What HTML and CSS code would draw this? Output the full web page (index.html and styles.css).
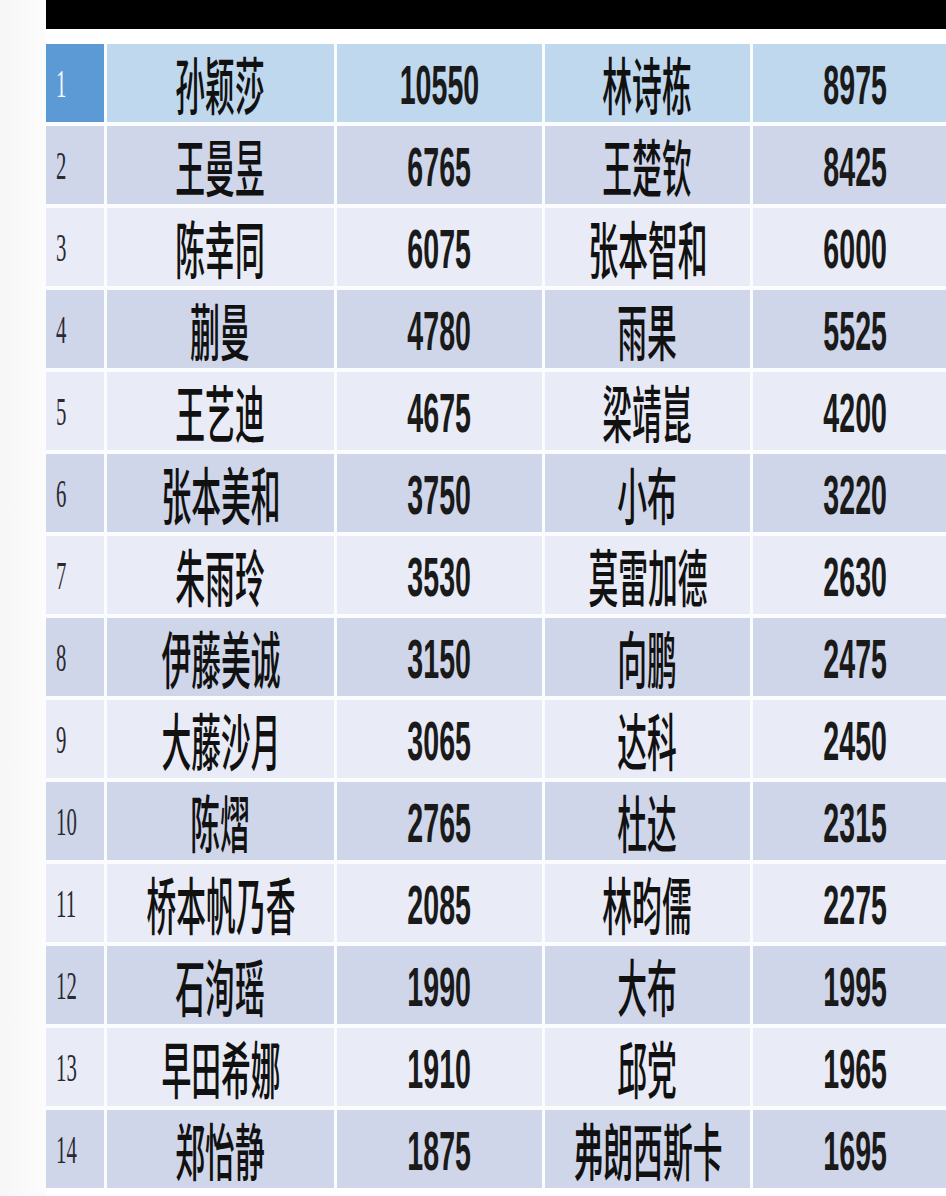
FILE: index.html
```html
<!DOCTYPE html>
<html lang="zh">
<head>
<meta charset="utf-8">
<title>排名</title>
<link rel="stylesheet" href="styles.css">
</head>
<body>
<div class="page">
  <div class="topbar"></div>
  <div class="table">
    <div class="row first"><div class="idx"><span>1</span></div><div class="cell"><span class="name">孙颖莎</span></div><div class="cell"><span class="num">10550</span></div><div class="cell"><span class="name">林诗栋</span></div><div class="cell"><span class="num">8975</span></div></div>
    <div class="row even"><div class="idx"><span>2</span></div><div class="cell"><span class="name">王曼昱</span></div><div class="cell"><span class="num">6765</span></div><div class="cell"><span class="name">王楚钦</span></div><div class="cell"><span class="num">8425</span></div></div>
    <div class="row odd"><div class="idx"><span>3</span></div><div class="cell"><span class="name">陈幸同</span></div><div class="cell"><span class="num">6075</span></div><div class="cell"><span class="name">张本智和</span></div><div class="cell"><span class="num">6000</span></div></div>
    <div class="row even"><div class="idx"><span>4</span></div><div class="cell"><span class="name">蒯曼</span></div><div class="cell"><span class="num">4780</span></div><div class="cell"><span class="name">雨果</span></div><div class="cell"><span class="num">5525</span></div></div>
    <div class="row odd"><div class="idx"><span>5</span></div><div class="cell"><span class="name">王艺迪</span></div><div class="cell"><span class="num">4675</span></div><div class="cell"><span class="name">梁靖崑</span></div><div class="cell"><span class="num">4200</span></div></div>
    <div class="row even"><div class="idx"><span>6</span></div><div class="cell"><span class="name">张本美和</span></div><div class="cell"><span class="num">3750</span></div><div class="cell"><span class="name">小布</span></div><div class="cell"><span class="num">3220</span></div></div>
    <div class="row odd"><div class="idx"><span>7</span></div><div class="cell"><span class="name">朱雨玲</span></div><div class="cell"><span class="num">3530</span></div><div class="cell"><span class="name">莫雷加德</span></div><div class="cell"><span class="num">2630</span></div></div>
    <div class="row even"><div class="idx"><span>8</span></div><div class="cell"><span class="name">伊藤美诚</span></div><div class="cell"><span class="num">3150</span></div><div class="cell"><span class="name">向鹏</span></div><div class="cell"><span class="num">2475</span></div></div>
    <div class="row odd"><div class="idx"><span>9</span></div><div class="cell"><span class="name">大藤沙月</span></div><div class="cell"><span class="num">3065</span></div><div class="cell"><span class="name">达科</span></div><div class="cell"><span class="num">2450</span></div></div>
    <div class="row even"><div class="idx"><span>10</span></div><div class="cell"><span class="name">陈熠</span></div><div class="cell"><span class="num">2765</span></div><div class="cell"><span class="name">杜达</span></div><div class="cell"><span class="num">2315</span></div></div>
    <div class="row odd"><div class="idx"><span>11</span></div><div class="cell"><span class="name">桥本帆乃香</span></div><div class="cell"><span class="num">2085</span></div><div class="cell"><span class="name">林昀儒</span></div><div class="cell"><span class="num">2275</span></div></div>
    <div class="row even"><div class="idx"><span>12</span></div><div class="cell"><span class="name">石洵瑶</span></div><div class="cell"><span class="num">1990</span></div><div class="cell"><span class="name">大布</span></div><div class="cell"><span class="num">1995</span></div></div>
    <div class="row odd"><div class="idx"><span>13</span></div><div class="cell"><span class="name">早田希娜</span></div><div class="cell"><span class="num">1910</span></div><div class="cell"><span class="name">邱党</span></div><div class="cell"><span class="num">1965</span></div></div>
    <div class="row even"><div class="idx"><span>14</span></div><div class="cell"><span class="name">郑怡静</span></div><div class="cell"><span class="num">1875</span></div><div class="cell"><span class="name">弗朗西斯卡</span></div><div class="cell"><span class="num">1695</span></div></div>
  </div>
</div>
</body>
</html>
```

FILE: styles.css
```css
html, body {
  margin: 0;
  padding: 0;
}
body {
  width: 946px;
  height: 1196px;
  overflow: hidden;
  background: linear-gradient(to right, #f6f6f6 0px, #fcfcfc 46px, #ffffff 46px);
}
.page {
  padding-left: 46px;
  height: 1196px;
  overflow: hidden;
}
.topbar {
  height: 29px;
  background: #000;
}
.table {
  margin-top: 15px;
  display: flex;
  flex-direction: column;
  gap: 4px;
  background: #fbfcfe;
}
.row {
  display: grid;
  grid-template-columns: 58px 227px 205px 205px 205px;
  column-gap: 3px;
  height: 78px;
}
.idx, .cell {
  display: flex;
  align-items: center;
}
.cell {
  justify-content: center;
}
.idx {
  padding-left: 10px;
}
.idx span {
  display: inline-block;
  font-family: "Liberation Serif", "Times New Roman", serif;
  font-size: 40px;
  color: #2a2a32;
  transform: scaleX(0.52);
  transform-origin: left center;
  line-height: 1;
  padding-top: 2px;
}
.name {
  display: inline-block;
  white-space: nowrap;
  font-family: "Noto Sans CJK SC", "Noto Sans", sans-serif;
  font-weight: 500;
  font-size: 62px;
  line-height: 1.1;
  color: #111;
  transform: scaleX(0.48);
}
.num {
  display: inline-block;
  white-space: nowrap;
  font-family: "Liberation Sans", Arial, sans-serif;
  font-weight: 700;
  font-size: 55px;
  line-height: 1.1;
  color: #1a1a1a;
  transform: scaleX(0.52);
  padding-top: 4px;
}
.first .idx { background: #5b9ad4; }
.first .idx span { color: #f4f8fc; }
.first .cell { background: #bfd8ee; }
.even .idx, .even .cell { background: #d0d6e9; }
.odd .idx, .odd .cell { background: #e9ecf6; }
```
